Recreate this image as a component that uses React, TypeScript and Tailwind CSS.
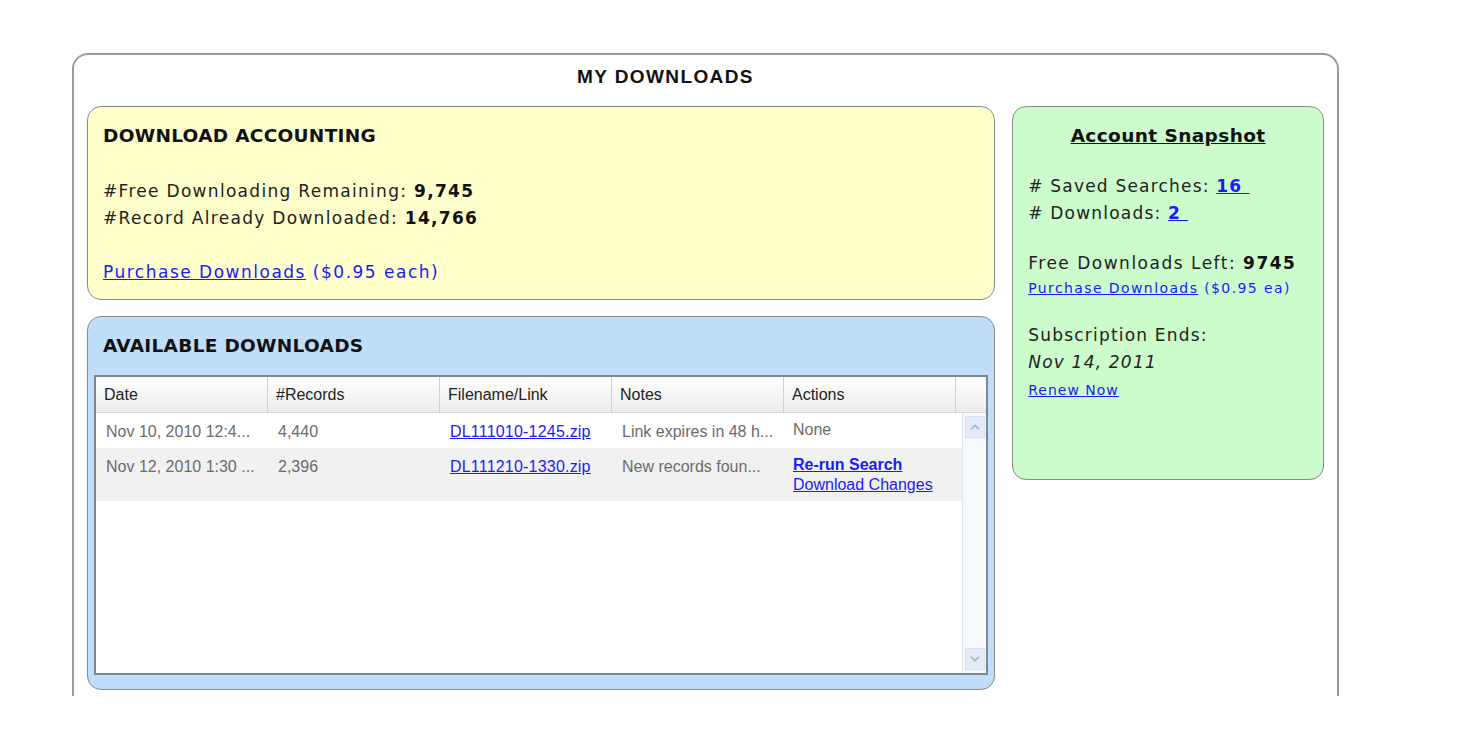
import { ChevronUp, ChevronDown } from 'lucide-react'

const rows = [
  {
    date: 'Nov 10, 2010 12:4...',
    records: '4,440',
    file: 'DL111010-1245.zip',
    notes: 'Link expires in 48 h...',
    actions: null,
  },
  {
    date: 'Nov 12, 2010 1:30 ...',
    records: '2,396',
    file: 'DL111210-1330.zip',
    notes: 'New records foun...',
    actions: ['Re-run Search', 'Download Changes'],
  },
]

const columns = ['Date', '#Records', 'Filename/Link', 'Notes', 'Actions']

const verdana = "font-['DejaVu_Sans',Verdana,sans-serif]"
const arial = "font-['Liberation_Sans',Arial,sans-serif]"

const DownloadsGrid = () => {
  return (
    <div className={`mx-[6px] h-[300px] border-2 border-[#7d8794] bg-white flex flex-col ${arial}`}>
      <div className="flex h-[36px] shrink-0 border-b border-[#d5d5d5] bg-gradient-to-b from-white to-[#ececec]">
        {columns.map((col) => (
          <div
            key={col}
            className="w-[172px] shrink-0 flex items-center px-[8px] text-[16px] text-[#222] border-r border-[#d0d0d0]"
          >
            {col}
          </div>
        ))}
        <div className="flex-1" />
      </div>
      <div className="flex flex-1 min-h-0">
        <div className="flex-1 text-[16px]">
          {rows.map((row, i) => (
            <div
              key={row.file}
              className={i % 2 === 0 ? 'flex bg-white h-[35px]' : 'flex bg-[#f1f1f1] h-[53px]'}
            >
              <div className="w-[172px] shrink-0 pl-[10px] pt-[7px] text-[#6b6b6b] whitespace-nowrap">{row.date}</div>
              <div className="w-[172px] shrink-0 pl-[10px] pt-[7px] text-[#6b6b6b]">{row.records}</div>
              <div className="w-[172px] shrink-0 pl-[10px] pt-[7px] tracking-[0.2px]">
                <a href="#" className="text-[#1a1aff] underline">{row.file}</a>
              </div>
              <div className="w-[171px] shrink-0 pl-[10px] pt-[7px] text-[#6b6b6b] whitespace-nowrap">{row.notes}</div>
              <div className="w-[172px] shrink-0 pl-[10px] pt-[7px] leading-[20px] whitespace-nowrap">
                {row.actions ? (
                  <>
                    <a href="#" className="block text-[#1a1aff] underline font-bold">{row.actions[0]}</a>
                    <a href="#" className="block text-[#1a1aff] underline">{row.actions[1]}</a>
                  </>
                ) : (
                  <span className="text-[#6b6b6b]">None</span>
                )}
              </div>
            </div>
          ))}
        </div>
        <div className="w-[24px] shrink-0 border-l border-[#dfe6f0] bg-[#f7f9fd] flex flex-col justify-between items-center py-[3px]">
          <div className="w-[20px] h-[22px] bg-[#e3ebf7] border border-[#d6e0ee] flex items-center justify-center">
            <ChevronUp className="w-[14px] h-[14px] text-[#9fb2cc]" strokeWidth={3} />
          </div>
          <div className="w-[20px] h-[22px] bg-[#e3ebf7] border border-[#d6e0ee] flex items-center justify-center">
            <ChevronDown className="w-[14px] h-[14px] text-[#9fb2cc]" strokeWidth={3} />
          </div>
        </div>
      </div>
    </div>
  )
}

const App = () => {
  return (
    <div className="min-h-[748px] bg-white pt-[53px] pl-[72px]">
      <div className="w-[1267px] h-[643px] border-2 border-b-0 border-[#9a9a9a] rounded-t-[16px] px-[13px]">
        <h1 className={`${arial} font-bold text-[19px] tracking-[1.4px] text-[#111] pl-[490px] pt-[8px] h-[51px]`}>
          MY DOWNLOADS
        </h1>
        <div className="flex gap-[17px]">
          <div className="w-[909px] flex flex-col gap-[16px]">
            {/* accounting */}
            <div className={`h-[194px] bg-[#ffffcc] border-[1.5px] border-[#8a8a8a] rounded-[14px] px-[15px] pt-[16px] ${verdana}`}>
              <h2 className="font-bold text-[18.5px] tracking-[0.3px] text-[#111] leading-[26px]">DOWNLOAD ACCOUNTING</h2>
              <div className="mt-[29px] text-[17px] leading-[27px] tracking-[1.3px] text-[#222]">
                <div>
                  #Free Downloading Remaining: <b className="text-[#111]">9,745</b>
                </div>
                <div>
                  #Record Already Downloaded: <b className="text-[#111]">14,766</b>
                </div>
              </div>
              <div className="mt-[27px] text-[17px] leading-[27px] tracking-[1.5px] text-[#1a1aff]">
                <a href="#" className="underline">Purchase Downloads</a> ($0.95 each)
              </div>
            </div>
            {/* available */}
            <div className="h-[374px] bg-[#c0ddfa] border-[1.5px] border-[#8a8a8a] rounded-[14px]">
              <h2 className={`${verdana} font-bold text-[18.5px] tracking-[0.3px] text-[#111] leading-[26px] px-[15px] pt-[16px] h-[58px]`}>
                AVAILABLE DOWNLOADS
              </h2>
              <DownloadsGrid />
            </div>
          </div>
          {/* snapshot */}
          <div className={`w-[312px] h-[374px] bg-[#ccfccc] border-[1.5px] border-[#8a8a8a] rounded-[14px] px-[15px] pt-[16px] ${verdana} text-[#222]`}>
            <h2 className="text-center font-bold text-[18.5px] tracking-[0.4px] leading-[26px] text-[#111] underline">Account Snapshot</h2>
            <div className="mt-[24px] text-[17px] leading-[27px] tracking-[1.2px]">
              <div>
                # Saved Searches: <a href="#" className="underline font-bold text-[#1a1aff]">16&nbsp;</a>
              </div>
              <div>
                # Downloads: <a href="#" className="underline font-bold text-[#1a1aff]">2&nbsp;</a>
              </div>
            </div>
            <div className="mt-[23px] text-[17px] leading-[27px] tracking-[1.5px]">
              Free Downloads Left: <b className="text-[#111]">9745</b>
            </div>
            <div className="mt-[2px] text-[14px] leading-[18px] tracking-[1.4px] text-[#1a1aff] whitespace-nowrap">
              <a href="#" className="underline">Purchase Downloads</a> ($0.95 ea)
            </div>
            <div className="mt-[25px] text-[17px] leading-[27px] tracking-[1.2px]">Subscription Ends:</div>
            <div className="text-[17px] leading-[27px] tracking-[1.2px] italic">Nov 14, 2011</div>
            <div className="mt-[5px] text-[14px] leading-[18px] tracking-[1px]">
              <a href="#" className="underline text-[#1a1aff]">Renew Now</a>
            </div>
          </div>
        </div>
      </div>
    </div>
  )
}

export default App
